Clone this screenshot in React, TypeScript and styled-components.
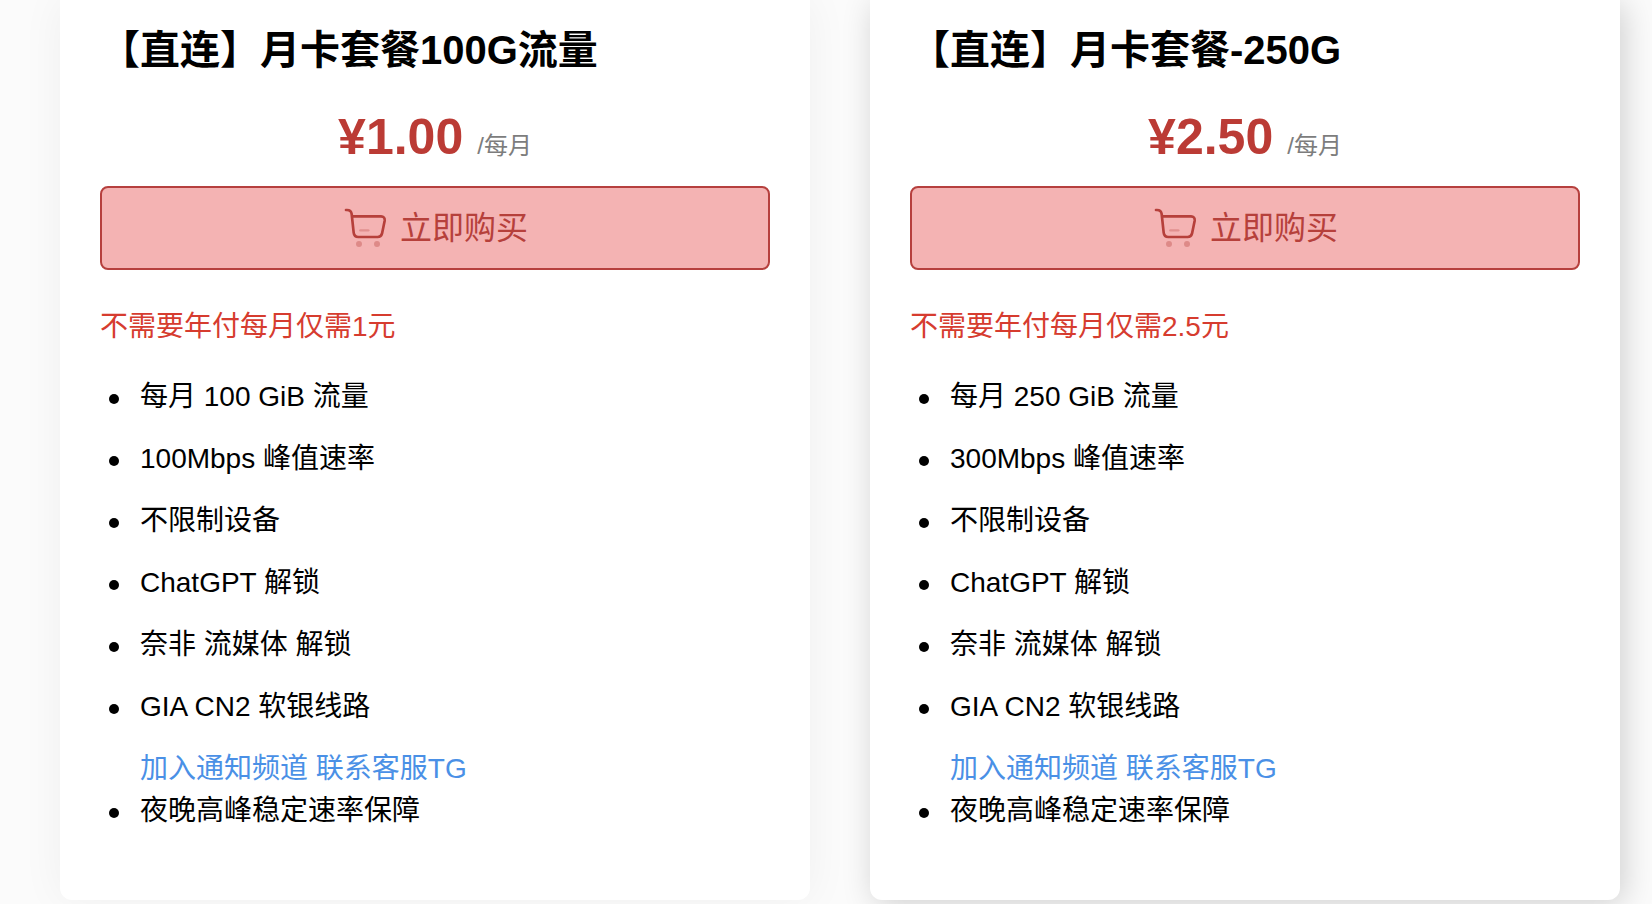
import React from "react";
import styled, { createGlobalStyle } from "styled-components";

const GlobalStyle = createGlobalStyle`
  *, *::before, *::after {
    box-sizing: border-box;
  }
  body {
    margin: 0;
    background: #fbfbfb;
    color: #000;
    font-family: "Liberation Sans", "Noto Sans CJK SC", sans-serif;
    font-size: 28px;
    line-height: 42px;
  }
`;

const PlanGrid = styled.main`
  display: grid;
  grid-template-columns: repeat(2, minmax(0, 1fr));
  gap: 60px;
  padding: 0 32px 4px 60px;
  overflow: hidden;
`;

const Card = styled.article<{ $raised: boolean }>`
  padding: 20px 40px 40px;
  background: #fff;
  border-radius: 0 0 12px 12px;
  box-shadow: ${(p) =>
    p.$raised ? "4px 4px 32px rgba(0, 0, 0, 0.18)" : "0 0 44px rgba(0, 0, 0, 0.05)"};
`;

const PlanName = styled.h2`
  margin: 0;
  font-size: 40px;
  font-weight: 700;
  line-height: 60px;
`;

const PriceRow = styled.p`
  display: flex;
  justify-content: center;
  align-items: baseline;
  gap: 14px;
  margin: 20px 0 12px;
  line-height: 74px;
`;

const Amount = styled.strong`
  color: #bb3b35;
  font-size: 50px;
`;

const Period = styled.span`
  color: #7d7d7d;
  font-size: 24px;
  line-height: 36px;
`;

const BuyButton = styled.button`
  display: flex;
  align-items: center;
  justify-content: center;
  gap: 10px;
  width: 100%;
  height: 84px;
  padding: 0;
  border: 2px solid #b6403e;
  border-radius: 8px;
  background: #f4b3b3;
  color: #b6403b;
  font: inherit;
  font-size: 32px;
  cursor: pointer;
`;

const CartSvg = styled.svg`
  width: 48px;
  height: 48px;
  fill: none;
  stroke: currentColor;
  stroke-width: 8;
  stroke-linecap: round;
  stroke-linejoin: round;
`;

const Note = styled.p`
  margin: 36px 0 28px;
  color: #d63c2f;
`;

const FeatureList = styled.ul`
  margin: 0 0 28px;
  padding-left: 40px;
  list-style: none;
`;

const Feature = styled.li`
  margin-bottom: 20px;

  &::before {
    content: "";
    display: inline-block;
    width: 10px;
    height: 10px;
    margin: 0 21px 0 -31px;
    border-radius: 50%;
    background: currentColor;
    vertical-align: middle;
  }

  &:nth-last-child(-n + 2) {
    margin-bottom: 0;
  }
`;

const ContactLine = styled.div`
  margin-top: 20px;
`;

const ContactLink = styled.a`
  color: #4a90e6;
  text-decoration: none;
`;

function CartIcon() {
  return (
    <CartSvg viewBox="0 0 144 144" aria-hidden="true">
      <path d="M12 18h3c8 0 13 4 14 12l6 56c1 9 6 13 14 13h58c8 0 11-3 13-10l8-39c1-8-3-13-11-13H31" />
      <path d="M55 79h24" strokeWidth="7" opacity="0.3" />
      <g fill="currentColor" stroke="none" opacity="0.35">
        <circle cx="51" cy="120" r="9" />
        <circle cx="105" cy="120" r="9" />
      </g>
    </CartSvg>
  );
}

interface Plan {
  name: string;
  price: string;
  note: string;
  traffic: string;
  speed: string;
  raised: boolean;
}

const plans: Plan[] = [
  {
    name: "【直连】月卡套餐100G流量",
    price: "¥1.00",
    note: "不需要年付每月仅需1元",
    traffic: "每月 100 GiB 流量",
    speed: "100Mbps 峰值速率",
    raised: false,
  },
  {
    name: "【直连】月卡套餐-250G",
    price: "¥2.50",
    note: "不需要年付每月仅需2.5元",
    traffic: "每月 250 GiB 流量",
    speed: "300Mbps 峰值速率",
    raised: true,
  },
];

function PlanCard({ plan }: { plan: Plan }) {
  return (
    <Card $raised={plan.raised}>
      <PlanName>{plan.name}</PlanName>
      <PriceRow>
        <Amount>{plan.price}</Amount>
        <Period>/每月</Period>
      </PriceRow>
      <BuyButton type="button">
        <CartIcon />
        立即购买
      </BuyButton>
      <Note>{plan.note}</Note>
      <FeatureList>
        <Feature>{plan.traffic}</Feature>
        <Feature>{plan.speed}</Feature>
        <Feature>不限制设备</Feature>
        <Feature>ChatGPT 解锁</Feature>
        <Feature>奈非 流媒体 解锁</Feature>
        <Feature>
          GIA CN2 软银线路
          <ContactLine>
            <ContactLink href="#channel">加入通知频道</ContactLink>{" "}
            <ContactLink href="#support">联系客服TG</ContactLink>
          </ContactLine>
        </Feature>
        <Feature>夜晚高峰稳定速率保障</Feature>
      </FeatureList>
    </Card>
  );
}

export default function App() {
  return (
    <>
      <GlobalStyle />
      <PlanGrid>
        {plans.map((plan) => (
          <PlanCard key={plan.name} plan={plan} />
        ))}
      </PlanGrid>
    </>
  );
}
